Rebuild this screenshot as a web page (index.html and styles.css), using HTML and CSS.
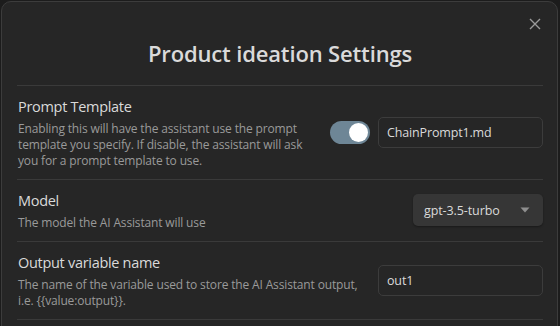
FILE: index.html
```html
<!DOCTYPE html>
<html lang="en">
<head>
<meta charset="utf-8">
<title>Product ideation Settings</title>
<link rel="stylesheet" href="styles.css">
</head>
<body>
<div class="modal">
  <button class="close" aria-label="Close">
    <svg width="12" height="12" viewBox="0 0 12 12"><path d="M1 1L11 11M11 1L1 11" stroke="#9a9a9a" stroke-width="1.4" fill="none"/></svg>
  </button>
  <div class="header">
    <h1 class="title">Product ideation Settings</h1>
  </div>
  <div class="item">
    <div class="info">
      <div class="name">Prompt Template</div>
      <div class="desc">Enabling this will have the assistant use the prompt template you specify. If disable, the assistant will ask you for a prompt template to use.</div>
    </div>
    <div class="control">
      <div class="toggle"><span class="knob"></span></div>
      <div class="input">ChainPrompt1.md</div>
    </div>
  </div>
  <div class="item">
    <div class="info">
      <div class="name">Model</div>
      <div class="desc">The model the AI Assistant will use</div>
    </div>
    <div class="control">
      <div class="dropdown"><span>gpt-3.5-turbo</span>
        <svg width="10" height="6" viewBox="0 0 10 6"><path d="M0.5 0.5H9.5L5 5.5Z" fill="#8f8f8f"/></svg>
      </div>
    </div>
  </div>
  <div class="item">
    <div class="info">
      <div class="name">Output variable name</div>
      <div class="desc">The name of the variable used to store the AI Assistant output, i.e. {{value:output}}.</div>
    </div>
    <div class="control">
      <div class="input">out1</div>
    </div>
  </div>
</div>
</body>
</html>
```
FILE: styles.css
```css
* { box-sizing: border-box; }
html, body { margin: 0; padding: 0; }
body {
  background: #1c1c1c;
  font-family: "Open Sans", "Noto Sans", sans-serif;
  width: 560px;
  height: 326px;
  overflow: hidden;
}
.modal {
  position: relative;
  margin: 1px 0 0 1px;
  width: 557px;
  height: 360px;
  background: #262626;
  border: 1px solid #3c3c3c;
  border-radius: 10px;
  padding: 0 14px 0 15px;
}
.close {
  position: absolute;
  top: 15px;
  right: 15px;
  width: 14px;
  height: 14px;
  padding: 1px;
  border: 0;
  background: none;
  display: flex;
  align-items: center;
  justify-content: center;
}
.header {
  border-bottom: 1px solid #3a3a3a;
  height: 84px;
  display: flex;
  justify-content: center;
  padding-top: 36px;
}
.title {
  margin: 0;
  font-size: 22px;
  line-height: 30px;
  font-weight: 600;
  color: #dadada;
  letter-spacing: -0.15px;
}
.item {
  display: flex;
  align-items: center;
  border-bottom: 1px solid #3a3a3a;
  padding: 9px 0 10px 1px;
}
.info {
  flex: 1 1 auto;
  margin-right: 18px;
}
.name {
  font-size: 14.5px;
  line-height: 24px;
  color: #dadada;
  letter-spacing: -0.3px;
}
.desc {
  margin-top: 2px;
  font-size: 12px;
  line-height: 16px;
  color: #9a9a9a;
  letter-spacing: -0.15px;
}
.control {
  flex: 0 0 auto;
  display: flex;
  align-items: center;
  gap: 8px;
}
.toggle {
  width: 40px;
  height: 23px;
  border-radius: 12px;
  background: #6e8696;
  display: flex;
  align-items: center;
  justify-content: flex-end;
  padding-right: 2px;
}
.knob {
  width: 19px;
  height: 19px;
  border-radius: 50%;
  background: #ffffff;
}
.input {
  width: 165px;
  height: 31px;
  border: 1px solid #3c3c3c;
  border-radius: 5px;
  background: #262626;
  color: #dadada;
  font-size: 12.5px;
  letter-spacing: -0.15px;
  line-height: 29px;
  padding-left: 8px;
}
.dropdown {
  width: 130px;
  height: 32px;
  border-radius: 5px;
  background: #363636;
  box-shadow: 0 1px 2px rgba(0,0,0,0.35);
  color: #dadada;
  font-size: 12.5px;
  letter-spacing: -0.1px;
  display: flex;
  align-items: center;
  justify-content: space-between;
  padding: 0 13px 0 11px;
}
```
